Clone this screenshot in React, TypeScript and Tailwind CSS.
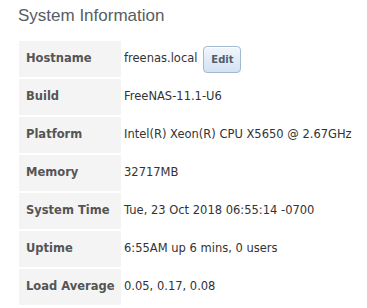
import React from 'react';

const rows: { label: string; value: string; edit?: boolean }[] = [
  { label: 'Hostname', value: 'freenas.local', edit: true },
  { label: 'Build', value: 'FreeNAS-11.1-U6' },
  { label: 'Platform', value: 'Intel(R) Xeon(R) CPU X5650 @ 2.67GHz' },
  { label: 'Memory', value: '32717MB' },
  { label: 'System Time', value: 'Tue, 23 Oct 2018 06:55:14 -0700' },
  { label: 'Uptime', value: '6:55AM up 6 mins, 0 users' },
  { label: 'Load Average', value: '0.05, 0.17, 0.08' },
];

const App: React.FC = () => {
  return (
    <div className="w-[367px] h-[308px] bg-white overflow-hidden">
      {/* TITLE */}
      <h2 className="pl-[18px] pt-[6px] text-[17px] leading-[20px] text-[#585d63] font-['Liberation_Sans',Arial,sans-serif]">
        System Information
      </h2>

      {/* INFO TABLE */}
      <div className="mt-[15px] ml-[19px] grid grid-cols-[102px_1fr] gap-y-[2px] font-['DejaVu_Sans',Verdana,sans-serif] text-[11.5px]">
        {rows.map((row) => (
          <React.Fragment key={row.label}>
            <div className="h-9 flex items-center pl-[7px] bg-[#f4f4f4] font-bold text-[#555555] whitespace-nowrap">
              {row.label}
            </div>
            <div className="h-9 flex items-center pl-[3px] text-[#333333] whitespace-nowrap">
              <span>{row.value}</span>
              {row.edit && (
                <button className="ml-[6px] w-[38px] h-[27px] rounded-[4px] border border-[#a3b8d3] bg-gradient-to-b from-[#f1f6fc] to-[#d3e2f3] text-[10px] font-bold text-[#4f5d6d] shadow-[inset_0_1px_0_#ffffff]">
                  Edit
                </button>
              )}
            </div>
          </React.Fragment>
        ))}
      </div>
    </div>
  );
};

export default App;
